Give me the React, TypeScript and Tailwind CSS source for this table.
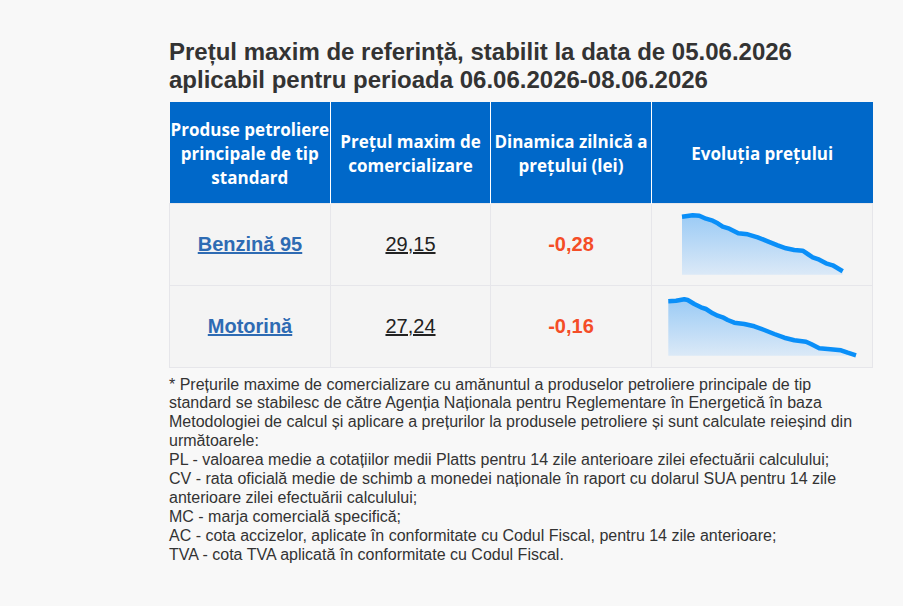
import React from "react";

const row1: [number, number][] = [
  [30, 12.7], [40.7, 11.3], [47.3, 11.7], [54, 14.7], [60.7, 16.7], [65.7, 19.3], [70.7, 22.7], [77.3, 24.7],
  [86.3, 29.3], [95.7, 30.3], [105.7, 33.3], [115.7, 37.3], [125.7, 41.3], [134, 44.3], [142.3, 46],
  [150.7, 46.7], [155.7, 50], [160.7, 53.3], [167.3, 55.7], [174, 59.3], [180.7, 61.3], [185.7, 64.3], [190.7, 67.3],
];
const row2: [number, number][] = [
  [16.3, 15.3], [24, 14.7], [32.3, 13.3], [35.7, 14], [42.3, 18], [49, 21.3], [54, 23], [60.7, 27.3], [65.7, 29.7],
  [70.7, 31.3], [75.7, 34], [82.3, 36.7], [92.3, 38], [102.3, 40.3], [112.3, 44], [122.3, 48], [132.3, 51.7],
  [142.3, 54.3], [154, 55.7], [159, 58], [167.3, 62.3], [175.7, 63], [189, 64.3], [195.7, 66.7], [204, 69.3],
];

function Spark({ pts, bottom, id }: { pts: [number, number][]; bottom: number; id: string }) {
  const line = pts.map((p, i) => `${i ? "L" : "M"}${p[0]} ${p[1]}`).join(" ");
  const first = pts[0];
  const last = pts[pts.length - 1];
  const area = `${line} L${last[0]} ${bottom} L${first[0]} ${bottom} Z`;
  return (
    <svg width="221" height="81" viewBox="0 0 221 81" className="block">
      <defs>
        <linearGradient id={id} x1="0" y1="0" x2="0" y2="1">
          <stop offset="0" stopColor="#9bcbf5" />
          <stop offset="1" stopColor="#dbe9f7" />
        </linearGradient>
      </defs>
      <path d={area} fill={`url(#${id})`} />
      <path d={line} fill="none" stroke="#0a8ff8" strokeWidth="4.5" strokeLinejoin="round" />
    </svg>
  );
}

export default function App() {
  const sans = { fontFamily: '"Liberation Sans", Arial, sans-serif' };
  return (
    <div className="min-h-[606px] w-full bg-[#f8f8f8]" style={sans}>
      <div className="ml-[169px] w-[703px] pt-[38px]">
        <h1 className="text-[24px] font-bold leading-[28px] text-[#333333] mb-[8px]">
          Prețul maxim de referință, stabilit la data de 05.06.2026
          <br />
          aplicabil pentru perioada 06.06.2026-08.06.2026
        </h1>
        <table className="w-[703px] border-collapse table-fixed">
          <colgroup>
            <col className="w-[161px]" />
            <col className="w-[160px]" />
            <col className="w-[161px]" />
            <col className="w-[221px]" />
          </colgroup>
          <thead>
            <tr
              className="h-[101px] bg-[#0068c9] text-white text-[17px] font-semibold leading-[24px]"
              style={{ fontFamily: '"Open Sans", sans-serif' }}
            >
              <th className="px-0 pt-[3px] text-center border-r border-white">Produse petroliere principale de tip standard</th>
              <th className="px-[4px] pt-[3px] text-center border-r border-white">Prețul maxim de comercializare</th>
              <th className="px-[2px] pt-[3px] text-center border-r border-white">Dinamica zilnică a prețului (lei)</th>
              <th className="px-[4px] pt-[3px] text-center">Evoluția prețului</th>
            </tr>
          </thead>
          <tbody className="bg-[#f4f4f4] text-[20px]">
            <tr className="h-[82px]">
              <td className="border border-[#e6e6ea] text-center">
                <a className="font-bold text-[#2e6bb3] underline">Benzină 95</a>
              </td>
              <td className="border border-[#e6e6ea] text-center">
                <span className="text-[#222222] underline">29,15</span>
              </td>
              <td className="border border-[#e6e6ea] text-center font-bold text-[#f44d27]">-0,28</td>
              <td className="border border-[#e6e6ea] p-0">
                <Spark pts={row1} bottom={70.7} id="g1" />
              </td>
            </tr>
            <tr className="h-[81px]">
              <td className="border border-[#e6e6ea] text-center">
                <a className="font-bold text-[#2e6bb3] underline">Motorină</a>
              </td>
              <td className="border border-[#e6e6ea] text-center">
                <span className="text-[#222222] underline">27,24</span>
              </td>
              <td className="border border-[#e6e6ea] text-center font-bold text-[#f44d27]">-0,16</td>
              <td className="border border-[#e6e6ea] p-0">
                <Spark pts={row2} bottom={69.7} id="g2" />
              </td>
            </tr>
          </tbody>
        </table>
        <div className="mt-[8px] text-[16px] leading-[18.9px] text-[#333333]">
          <p>
            * Prețurile maxime de comercializare cu amănuntul a produselor petroliere principale de tip standard se
            stabilesc de către Agenția Naționala pentru Reglementare în Energetică în baza Metodologiei de calcul și
            aplicare a prețurilor la produsele petroliere și sunt calculate reieșind din următoarele:
          </p>
          <p>PL - valoarea medie a cotațiilor medii Platts pentru 14 zile anterioare zilei efectuării calculului;</p>
          <p>
            CV - rata oficială medie de schimb a monedei naționale în raport cu dolarul SUA pentru 14 zile anterioare
            zilei efectuării calculului;
          </p>
          <p>MC - marja comercială specifică;</p>
          <p>AC - cota accizelor, aplicate în conformitate cu Codul Fiscal, pentru 14 zile anterioare;</p>
          <p>TVA - cota TVA aplicată în conformitate cu Codul Fiscal.</p>
        </div>
      </div>
    </div>
  );
}
